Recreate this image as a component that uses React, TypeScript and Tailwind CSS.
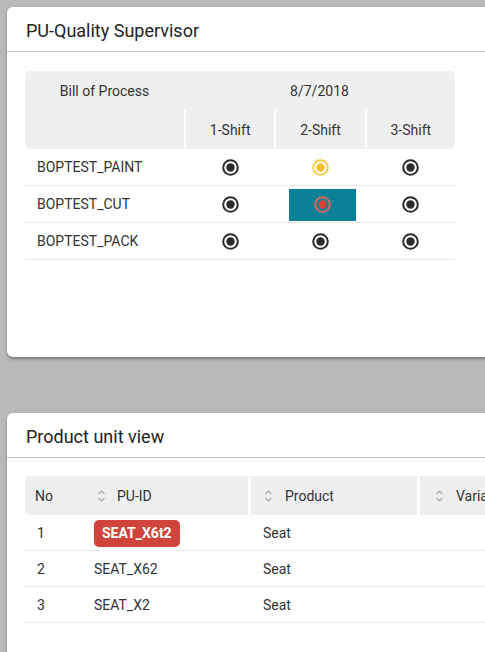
import React from 'react';

type Tone = 'dark' | 'yellow' | 'red';

const RING: Record<Tone, string> = {
  dark: '#2b2b2b',
  yellow: '#ffcb45',
  red: '#e0645c',
};
const DOT: Record<Tone, string> = {
  dark: '#2b2b2b',
  yellow: '#ffbf16',
  red: '#d4433a',
};

function RadioMark({ tone = 'dark', clear = false }: { tone?: Tone; clear?: boolean }) {
  return (
    <svg width="17" height="17" viewBox="0 0 17 17" className="block">
      <circle cx="8.5" cy="8.5" r="7.3" fill={clear ? 'none' : '#fff'} stroke={RING[tone]} strokeWidth="2" />
      <circle cx="8.5" cy="8.5" r="4.2" fill={DOT[tone]} />
    </svg>
  );
}

function SortIcon() {
  return (
    <svg width="9" height="14" viewBox="0 0 9 14" fill="none" stroke="#a8a8a8" strokeWidth="1.2" className="block">
      <path d="M1.5 5 L4.5 2 L7.5 5" />
      <path d="M1.5 9 L4.5 12 L7.5 9" />
    </svg>
  );
}

const shifts: { name: string; cells: { tone: Tone; active?: boolean }[] }[] = [
  { name: 'BOPTEST_PAINT', cells: [{ tone: 'dark' }, { tone: 'yellow' }, { tone: 'dark' }] },
  { name: 'BOPTEST_CUT', cells: [{ tone: 'dark' }, { tone: 'red', active: true }, { tone: 'dark' }] },
  { name: 'BOPTEST_PACK', cells: [{ tone: 'dark' }, { tone: 'dark' }, { tone: 'dark' }] },
];

const units = [
  { no: 1, id: 'SEAT_X6t2', product: 'Seat', flagged: true },
  { no: 2, id: 'SEAT_X62', product: 'Seat' },
  { no: 3, id: 'SEAT_X2', product: 'Seat' },
];

function CardHeader({ title }: { title: string }) {
  return (
    <div className="flex h-[45px] items-center border-b border-[#c4c4c4] pl-[19px] pt-[2px]">
      <h2 className="text-[18px] text-[#222]">{title}</h2>
    </div>
  );
}

export default function App() {
  return (
    <div
      className="h-[652px] w-[485px] overflow-hidden bg-[#b9b9b9] pl-[7px] pt-[7px] text-[#333]"
      style={{ fontFamily: 'Roboto, "Noto Sans", sans-serif' }}
    >
      <div className="h-[350px] w-[520px] rounded-[6px] bg-white shadow-[0_2px_3px_rgba(0,0,0,0.35)]">
        <CardHeader title="PU-Quality Supervisor" />
        <div className="pl-[18px] pt-[19px]">
          <div className="w-[430px] text-[14px]">
            <div className="rounded-[5px] bg-[#efefef]">
              <div className="flex h-[39px] items-center pt-[1px]">
                <div className="w-[159px] text-center">Bill of Process</div>
                <div className="flex-1 text-center">8/7/2018</div>
              </div>
              <div className="flex h-[39px]">
                <div className="w-[159px]" />
                {['1-Shift', '2-Shift', '3-Shift'].map((s) => (
                  <div key={s} className="flex flex-1 items-center justify-center border-l-[2px] border-white pt-[2px]">
                    {s}
                  </div>
                ))}
              </div>
            </div>
            {shifts.map((row) => (
              <div key={row.name} className="flex h-[37px] items-center border-b border-[#e8e8e8] pt-[1px]">
                <div className="w-[161px] pl-[12px]">{row.name}</div>
                {row.cells.map((c, i) => (
                  <div key={i} className="flex h-full flex-1 items-center justify-center">
                    {c.active ? (
                      <div className="flex h-[32px] w-[67px] translate-x-[2px] items-center justify-center bg-[#0a8097]">
                        <RadioMark tone={c.tone} clear />
                      </div>
                    ) : (
                      <RadioMark tone={c.tone} />
                    )}
                  </div>
                ))}
              </div>
            ))}
          </div>
        </div>
      </div>

      <div className="mt-[56px] h-[300px] w-[520px] rounded-[6px] bg-white shadow-[0_2px_3px_rgba(0,0,0,0.35)]">
        <CardHeader title="Product unit view" />
        <div className="pl-[18px] pt-[18px] text-[14px]">
          <div className="flex h-[39px] items-center rounded-l-[5px] bg-[#efefef] pt-[1px]">
            <div className="w-[59px] pl-[10px]">No</div>
            <div className="flex h-full w-[164px] items-center gap-[11px] pl-[13px]">
              <SortIcon />
              <span>PU-ID</span>
            </div>
            <div className="flex h-full w-[169px] items-center gap-[12px] border-l-[3px] border-white pl-[13px]">
              <SortIcon />
              <span>Product</span>
            </div>
            <div className="flex h-full flex-1 items-center gap-[12px] border-l-[3px] border-white pl-[15px]">
              <SortIcon />
              <span>Variant</span>
            </div>
          </div>
          {units.map((u) => (
            <div key={u.no} className="flex h-[36px] items-center border-b border-[#e8e8e8] pt-[1px]">
              <div className="w-[59px] pl-[12px]">{u.no}</div>
              <div className="w-[167px] pl-[10px]">
                {u.flagged ? (
                  <span className="inline-flex h-[27px] items-center rounded-[5px] bg-[#d1443b] px-[8px] font-bold text-white">
                    {u.id}
                  </span>
                ) : (
                  u.id
                )}
              </div>
              <div className="flex-1 pl-[12px]">{u.product}</div>
            </div>
          ))}
        </div>
      </div>
    </div>
  );
}
